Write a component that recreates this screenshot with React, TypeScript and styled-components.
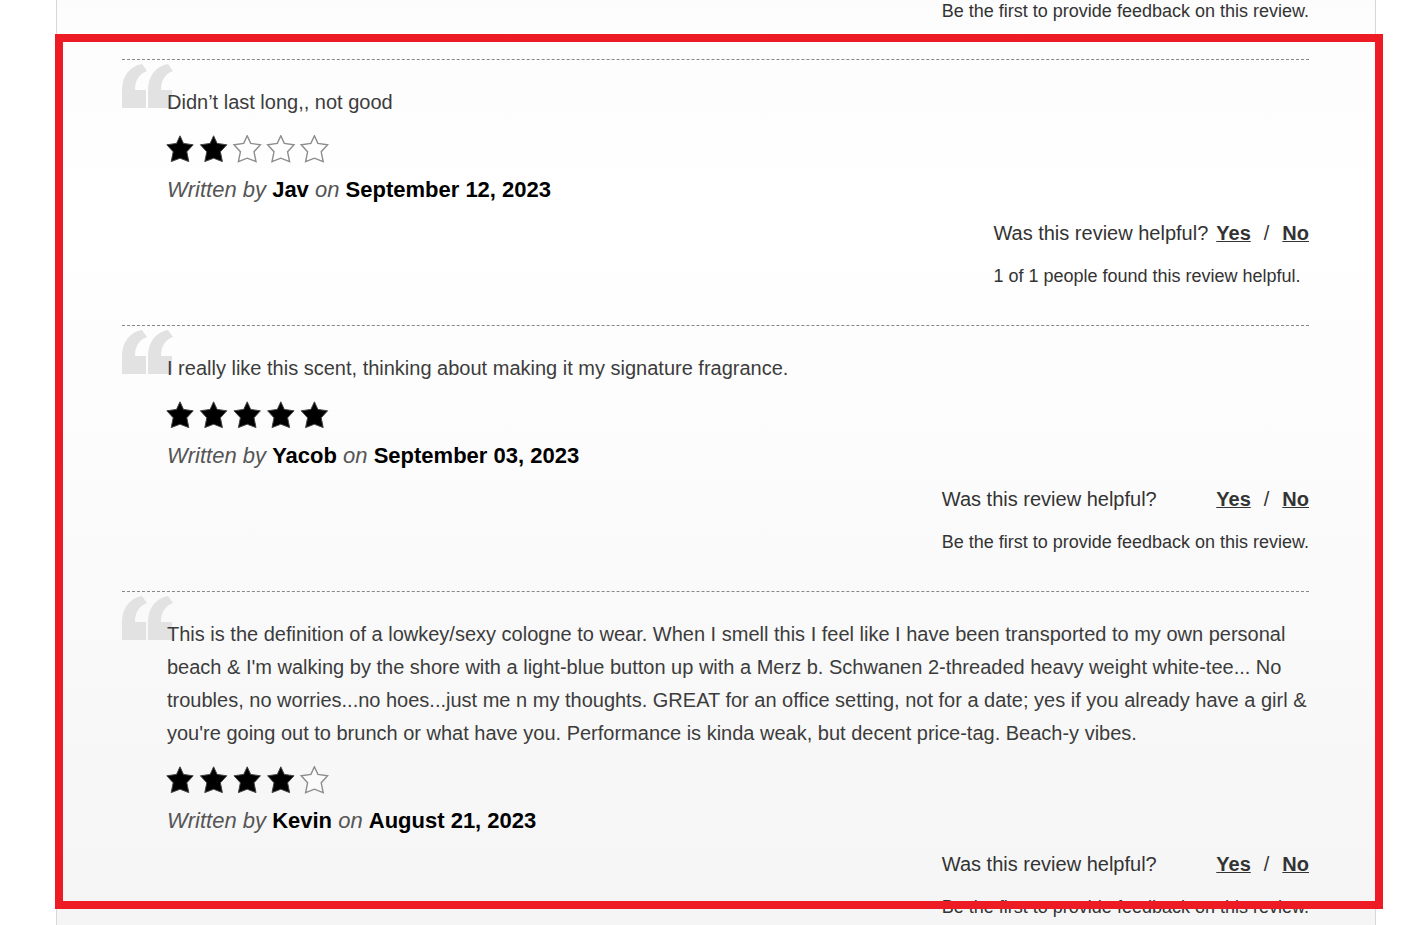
import React from 'react';
import styled, { createGlobalStyle } from 'styled-components';

const GlobalStyle = createGlobalStyle`
  * { box-sizing: border-box; }
  body {
    margin: 0;
    background: #fff;
    color: #333;
    font-family: "Liberation Sans", Arial, sans-serif;
  }
`;

const Panel = styled.main`
  position: relative;
  min-height: 100vh;
  margin: 0 28px 0 56px;
  padding: 0 66px 0 65px;
  border: solid #d8d8d8;
  border-width: 0 1px;
  background: linear-gradient(#fcfcfc, #fff 24%, #f5f5f5);
`;

const Highlight = styled.div`
  position: absolute;
  top: 34px;
  right: -8px;
  bottom: 16px;
  left: -2px;
  border: 8px solid #ed1c24;
  pointer-events: none;
`;

const Review = styled.article`
  position: relative;
  display: flex;
  flex-direction: column;
  padding: 26px 0 38px 45px;
  border-top: 1px dashed #888;

  &:last-of-type { padding-bottom: 0; }
`;

const QuoteMark = styled.svg`
  position: absolute;
  top: 4px;
  left: 0;
  width: 51px;
  height: 44px;
  fill: #e2e2e2;
`;

const Body = styled.p`
  position: relative;
  margin: 0;
  color: #3c3c3c;
  font-size: 20px;
  line-height: 33px;
`;

const Stars = styled.svg`
  width: 164px;
  height: 28px;
  margin: 16px 0 10px -1px;
`;

const Byline = styled.p`
  margin: 0;
  color: #555;
  font-size: 22px;
  font-style: italic;
  line-height: 33px;

  strong {
    color: #000;
    font-style: normal;
  }
`;

const Helpful = styled.div`
  align-self: flex-end;
  margin-top: 11px;
`;

const Question = styled.div`
  display: flex;
  justify-content: space-between;
  gap: 8px;
  margin-bottom: 15px;
  font-size: 20px;
  line-height: 33px;
`;

const Votes = styled.span`
  display: flex;
  gap: 13px;
`;

const Vote = styled.a`
  color: #333;
  font-weight: bold;
  text-decoration-thickness: 1px;
`;

const Feedback = styled.p`
  margin: 0;
  font-size: 18px;
  line-height: 22px;
`;

const PreviousFeedback = styled(Feedback)`
  padding-bottom: 37px;
  text-align: right;
`;

const FIRST = 'Be the first to provide feedback on this review.';

interface ReviewData {
  text: string;
  rating: number;
  author: string;
  date: string;
  feedback: string;
}

const reviews: ReviewData[] = [
  {
    text: 'Didn’t last long,, not good',
    rating: 2,
    author: 'Jav',
    date: 'September 12, 2023',
    feedback: '1 of 1 people found this review helpful.',
  },
  {
    text: 'I really like this scent, thinking about making it my signature fragrance.',
    rating: 5,
    author: 'Yacob',
    date: 'September 03, 2023',
    feedback: FIRST,
  },
  {
    text: "This is the definition of a lowkey/sexy cologne to wear. When I smell this I feel like I have been transported to my own personal beach & I'm walking by the shore with a light-blue button up with a Merz b. Schwanen 2-threaded heavy weight white-tee... No troubles, no worries...no hoes...just me n my thoughts. GREAT for an office setting, not for a date; yes if you already have a girl & you're going out to brunch or what have you. Performance is kinda weak, but decent price-tag. Beach-y vibes.",
    rating: 4,
    author: 'Kevin',
    date: 'August 21, 2023',
    feedback: FIRST,
  },
];

const STAR = 'M14 0.8L17.5 8.4L27.2 9.8L20.8 16.8L22.8 26.6L14 23.2L5.2 26.6L7.2 16.8L0.8 9.8L10.5 8.4Z';
const QUOTE = 'M0 44V26C0 12 8 2 20 0L25 7C17 10 13 16 13 26H24V44Z';

function Rating({ value }: { value: number }) {
  return (
    <Stars viewBox="0 0 164 28" role="img" aria-label={`${value} out of 5 stars`}>
      {[0, 1, 2, 3, 4].map((i) => (
        <path
          key={i}
          d={STAR}
          transform={`translate(${i * 33.6} 0)`}
          fill={i < value ? '#000' : '#fff'}
          fillOpacity={i < value ? 1 : 0.5}
          stroke={i < value ? '#444' : '#8c8c8c'}
          strokeWidth={i < value ? 1 : 1.4}
        />
      ))}
    </Stars>
  );
}

export default function App() {
  return (
    <>
      <GlobalStyle />
      <Panel>
        <PreviousFeedback>{FIRST}</PreviousFeedback>
        {reviews.map((r) => (
          <Review key={r.author}>
            <QuoteMark viewBox="0 0 51 44" aria-hidden="true">
              <path d={QUOTE} />
              <path d={QUOTE} transform="translate(26 0)" />
            </QuoteMark>
            <Body>{r.text}</Body>
            <Rating value={r.rating} />
            <Byline>
              Written by <strong>{r.author}</strong> on <strong>{r.date}</strong>
            </Byline>
            <Helpful>
              <Question>
                <span>Was this review helpful?</span>
                <Votes>
                  <Vote href="#yes">Yes</Vote>
                  <span>/</span>
                  <Vote href="#no">No</Vote>
                </Votes>
              </Question>
              <Feedback>{r.feedback}</Feedback>
            </Helpful>
          </Review>
        ))}
        <Highlight />
      </Panel>
    </>
  );
}
